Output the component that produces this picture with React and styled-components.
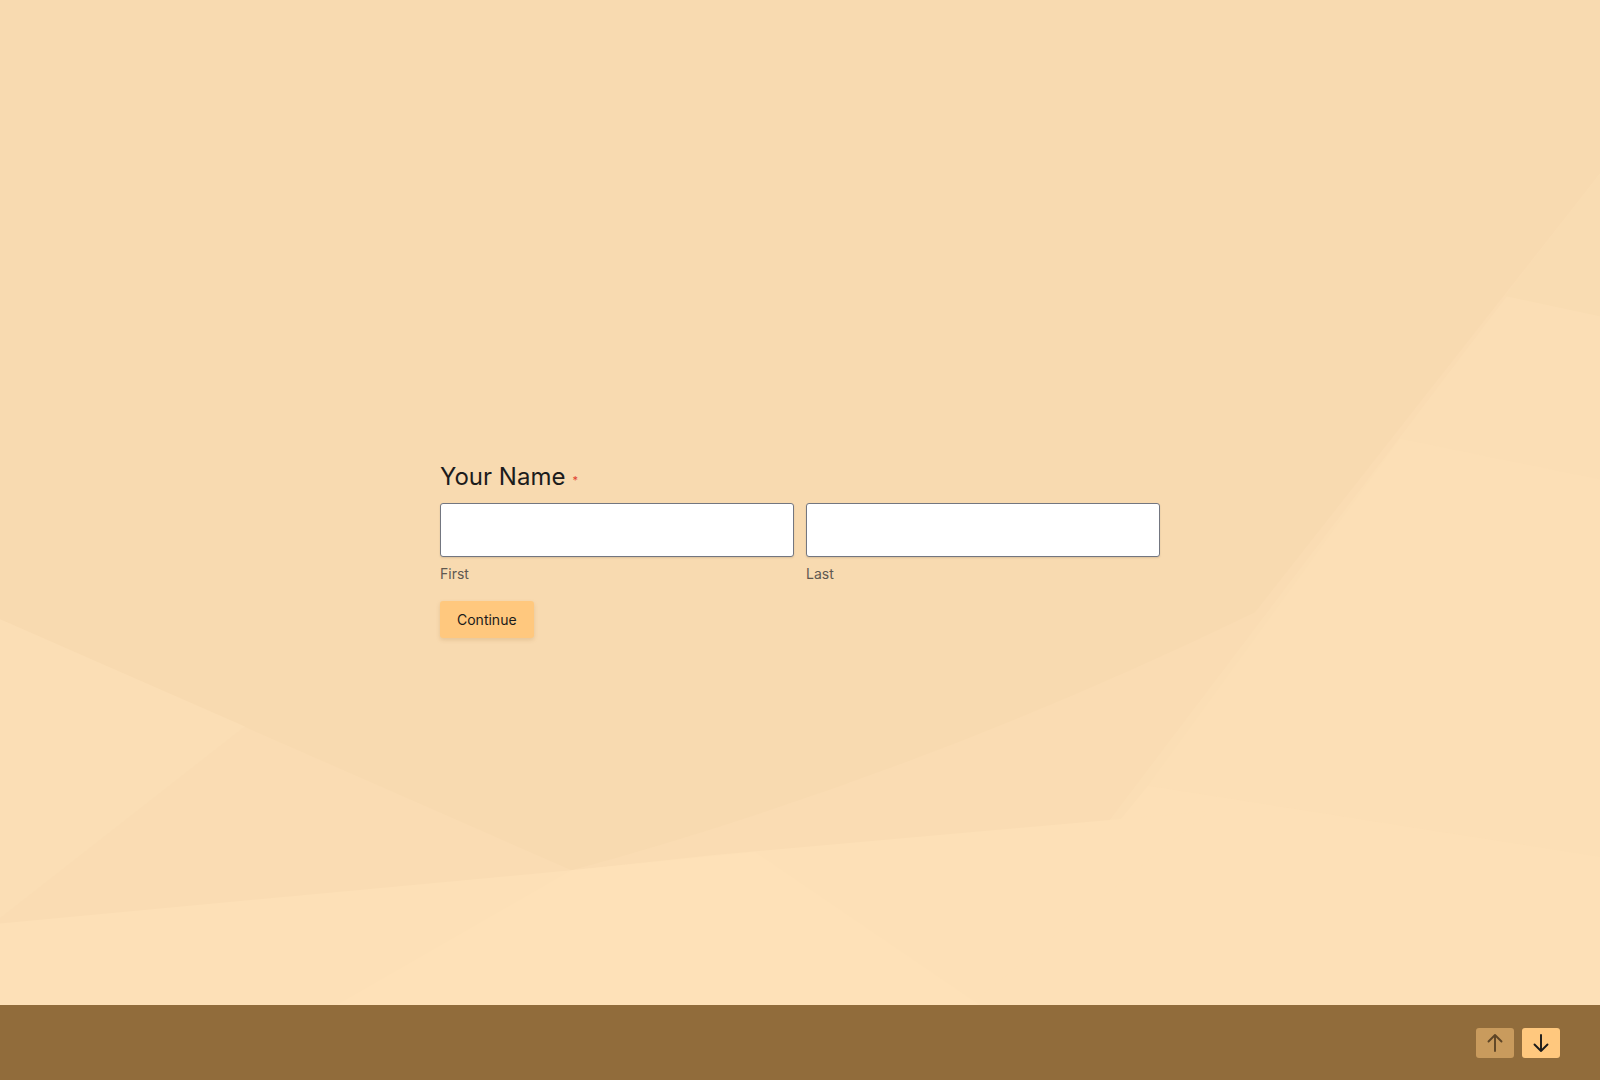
import React from "react";
import styled, { createGlobalStyle } from "styled-components";

const GlobalStyle = createGlobalStyle`
  html, body {
    margin: 0;
    padding: 0;
    background: #f8dab0;
  }
  * {
    box-sizing: border-box;
  }
  body {
    font-family: Inter, "Noto Sans", "Liberation Sans", sans-serif;
    color: #1f1f1f;
  }
`;

function Backdrop() {
  return (
    <Style.Backdrop viewBox="0 0 1568 985" preserveAspectRatio="none">
      <rect x="0" y="0" width="1568" height="985" fill="#f8dab0" />
      <path
        d="M0 607 L560 853 Q900 760 1230 600 L1568 170 L1568 985 L0 985 Z"
        fill="#fadcb3"
      />
      <path d="M0 607 L240 712 L0 900 Z" fill="#fbdeb5" />
      <path d="M1568 170 L1568 985 L950 985 Z" fill="#fbdeb5" />
      <path d="M1372 430 L1568 470 L1568 840 L1125 770 Z" fill="#fcdfb6" />
      <path d="M1125 770 L1568 840 L1568 985 L950 985 Z" fill="#fde0b7" />
      <path d="M1475 290 L1568 310 L1568 170 Z" fill="#f9dcb2" />
      <path d="M0 905 L560 853 L700 838 L1185 795 L950 985 L0 985 Z" fill="#fde0b7" />
      <path d="M330 985 L560 853 L740 835 L960 985 Z" fill="#fee1b8" />
    </Style.Backdrop>
  );
}

function ArrowIcon({ down }) {
  return (
    <svg width="20" height="20" viewBox="0 0 20 20" fill="none">
      {down ? (
        <path
          d="M10 2 V18 M3.5 11.5 L10 18 L16.5 11.5"
          stroke="currentColor"
          strokeWidth="1.9"
          strokeLinecap="round"
          strokeLinejoin="round"
        />
      ) : (
        <path
          d="M10 18 V2 M3.5 8.5 L10 2 L16.5 8.5"
          stroke="currentColor"
          strokeWidth="1.9"
          strokeLinecap="round"
          strokeLinejoin="round"
        />
      )}
    </svg>
  );
}

export default function App() {
  return (
    <Style.Page>
      <GlobalStyle />
      <Style.Main>
        <Backdrop />
        <Style.Form onSubmit={e => e.preventDefault()}>
          <Style.Heading>
            Your Name<Style.Required>*</Style.Required>
          </Style.Heading>
          <Style.Fields>
            <Style.Field>
              <Style.Input type="text" aria-label="First" />
              <Style.Sublabel>First</Style.Sublabel>
            </Style.Field>
            <Style.Field>
              <Style.Input type="text" aria-label="Last" />
              <Style.Sublabel>Last</Style.Sublabel>
            </Style.Field>
          </Style.Fields>
          <Style.Continue type="submit">Continue</Style.Continue>
        </Style.Form>
      </Style.Main>
      <Style.Footer>
        <Style.NavButton aria-label="Previous">
          <ArrowIcon />
        </Style.NavButton>
        <Style.NavButton aria-label="Next" $active>
          <ArrowIcon down />
        </Style.NavButton>
      </Style.Footer>
    </Style.Page>
  );
}

const Style = {
  Page: styled.div`
    display: flex;
    flex-direction: column;
    min-height: 100vh;
  `,
  Main: styled.main`
    position: relative;
    flex: 1;
    display: flex;
    align-items: center;
    justify-content: center;
    padding-top: 93px;
    overflow: hidden;
  `,
  Backdrop: styled.svg`
    position: absolute;
    inset: 0;
    width: 100%;
    height: 100%;
    display: block;
  `,
  Form: styled.form`
    position: relative;
    width: 720px;
    display: flex;
    flex-direction: column;
    align-items: flex-start;
  `,
  Heading: styled.h2`
    margin: 0 0 10px;
    font-size: 24px;
    line-height: 32px;
    font-weight: 400;
    color: #1c1c1c;
  `,
  Required: styled.span`
    display: inline-block;
    margin-left: 7px;
    font-size: 11px;
    line-height: 1;
    color: #e0412f;
    vertical-align: 1px;
  `,
  Fields: styled.div`
    display: grid;
    grid-template-columns: 1fr 1fr;
    gap: 12px;
    width: 100%;
  `,
  Field: styled.div`
    display: flex;
    flex-direction: column;
  `,
  Input: styled.input`
    height: 54px;
    width: 100%;
    padding: 0 12px;
    border: 1px solid #737680;
    border-radius: 3px;
    background: #ffffff;
    box-shadow: 0 1px 2px rgba(0, 0, 0, 0.12);
    font: inherit;
    font-size: 16px;
    outline: none;
  `,
  Sublabel: styled.label`
    margin-top: 7px;
    font-size: 14px;
    line-height: 20px;
    color: #5f5850;
  `,
  Continue: styled.button`
    margin-top: 17px;
    height: 37px;
    padding: 0 17px;
    border: none;
    border-radius: 3px;
    background: #ffc87e;
    box-shadow: 0 2px 4px rgba(150, 100, 40, 0.18);
    font-family: inherit;
    font-size: 14px;
    color: #1a1a1a;
    cursor: pointer;
  `,
  Footer: styled.footer`
    height: 75px;
    flex-shrink: 0;
    display: flex;
    align-items: center;
    justify-content: flex-end;
    gap: 8px;
    padding: 0 40px 0 0;
    background: #916c3b;
  `,
  NavButton: styled.button`
    width: 38px;
    height: 30px;
    padding: 0;
    display: flex;
    align-items: center;
    justify-content: center;
    border: none;
    border-radius: 3px;
    background: ${p => (p.$active ? "#ffc87e" : "#c99b5d")};
    color: ${p => (p.$active ? "#1a1a1a" : "#5e4526")};
    cursor: pointer;
  `
};
